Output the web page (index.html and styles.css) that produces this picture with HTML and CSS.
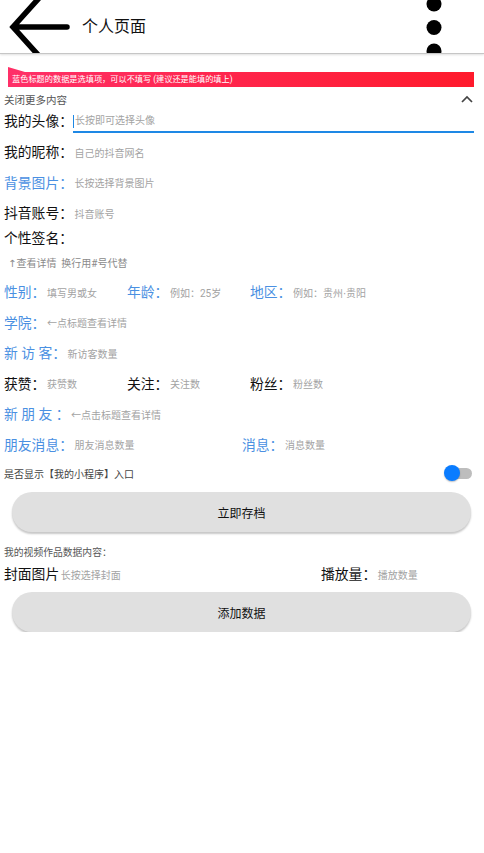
FILE: index.html
```html
<!DOCTYPE html>
<html lang="zh">
<head>
<meta charset="utf-8">
<title>个人页面</title>
<link rel="stylesheet" href="styles.css">
</head>
<body>
<div class="page">
  <header class="appbar">
    <svg class="back" width="80" height="53" viewBox="0 0 80 53">
      <path d="M40 -3 L13 27 L40 57 M13 27 H67" fill="none" stroke="#000" stroke-width="5.5" stroke-linecap="round" stroke-linejoin="miter"/>
    </svg>
    <div class="title">个人页面</div>
    <svg class="more" width="20" height="53" viewBox="0 0 20 53">
      <circle cx="10" cy="4" r="7.5" fill="#000"/>
      <circle cx="10" cy="27.5" r="7.5" fill="#000"/>
      <circle cx="10" cy="51" r="7.5" fill="#000"/>
    </svg>
  </header>

  <div class="banner">蓝色标题的数据是选填项，可以不填写 (建议还是能填的填上)</div>

  <div class="collapse">
    <span>关闭更多内容</span>
    <svg width="14" height="10" viewBox="0 0 14 10"><polyline points="2,8 7,3 12,8" fill="none" stroke="#444" stroke-width="1.7"/></svg>
  </div>

  <div class="form">
    <div class="row avatar">
      <span class="lbl">我的头像：</span>
      <span class="input focused"><span class="cursor"></span>长按即可选择头像</span>
    </div>
    <div class="row r1 first">
      <span class="lbl">我的昵称：</span><span class="ph">自己的抖音网名</span>
    </div>
    <div class="row r1">
      <span class="lbl blue">背景图片：</span><span class="ph">长按选择背景图片</span>
    </div>
    <div class="row r1">
      <span class="lbl">抖音账号：</span><span class="ph">抖音账号</span>
    </div>
    <div class="row sign">
      <span class="lbl">个性签名：</span>
    </div>
    <div class="row tip">
      <span class="tiptext"><span class="arrow">↑</span>查看详情&nbsp;&nbsp;换行用#号代替</span>
    </div>
    <div class="row r1 grid3 after-tip">
      <div class="cell"><span class="lbl blue">性别：</span><span class="ph">填写男或女</span></div>
      <div class="cell"><span class="lbl blue">年龄：</span><span class="ph">例如：25岁</span></div>
      <div class="cell"><span class="lbl blue">地区：</span><span class="ph">例如：贵州<span class="dot">·</span>贵阳</span></div>
    </div>
    <div class="row r1">
      <span class="lbl blue">学院：</span><span class="ph">←点标题查看详情</span>
    </div>
    <div class="row r1">
      <span class="lbl blue">新 访 客：</span><span class="ph">新访客数量</span>
    </div>
    <div class="row r1 grid3">
      <div class="cell"><span class="lbl">获赞：</span><span class="ph">获赞数</span></div>
      <div class="cell"><span class="lbl">关注：</span><span class="ph">关注数</span></div>
      <div class="cell"><span class="lbl">粉丝：</span><span class="ph">粉丝数</span></div>
    </div>
    <div class="row r1">
      <span class="lbl blue">新 朋 友 ：</span><span class="ph">←点击标题查看详情</span>
    </div>
    <div class="row r1 grid2">
      <div class="cell"><span class="lbl blue">朋友消息：</span><span class="ph">朋友消息数量</span></div>
      <div class="cell"><span class="lbl blue">消息：</span><span class="ph">消息数量</span></div>
    </div>
    <div class="row switch-row">
      <span class="switch-label">是否显示【我的小程序】入口</span>
      <span class="switch"><span class="track"></span><span class="thumb"></span></span>
    </div>
  </div>

  <button class="btn save">立即存档</button>

  <div class="form">
    <div class="section-label">我的视频作品数据内容：</div>
    <div class="row cover grid-video">
      <div class="cell"><span class="lbl">封面图片</span><span class="ph">长按选择封面</span></div>
      <div class="cell"><span class="lbl">播放量：</span><span class="ph">播放数量</span></div>
    </div>
  </div>

  <button class="btn add">添加数据</button>
</div>
</body>
</html>
```

FILE: styles.css
```css
html, body {
  margin: 0;
  padding: 0;
  background: #fff;
}
body {
  font-family: Roboto, "Noto Sans CJK SC", sans-serif;
  color: #111;
}
.page {
  width: 484px;
}
.appbar {
  height: 53px;
  display: flex;
  align-items: center;
  overflow: hidden;
  background: #fff;
  border-bottom: 1px solid #c6c6c6;
  box-shadow: 0 1px 2px rgba(0, 0, 0, 0.12);
}
.back {
  display: block;
  flex: none;
}
.title {
  margin-left: 2px;
  font-size: 16px;
  line-height: 53px;
  color: #111;
  flex: 1;
}
.more {
  display: block;
  flex: none;
  margin-right: 40px;
}
.banner {
  margin: 13px 10px 0 8px;
  height: 20px;
  box-sizing: border-box;
  padding: 5px 0 0 4px;
  line-height: 15px;
  font-size: 8.2px;
  color: #fff;
  white-space: nowrap;
  background: linear-gradient(to right, #ff3068, #ff1a2c);
  clip-path: polygon(0 0, 17px 5px, 100% 5px, 100% 100%, 0 100%);
}
.collapse {
  margin-top: 1px;
  height: 22px;
  display: flex;
  align-items: center;
  justify-content: space-between;
  padding: 0 10px 0 4px;
  font-size: 10.5px;
  color: #555;
}
.collapse svg {
  display: block;
}
.form {
  padding: 0 10px 0 4px;
}
.row {
  display: flex;
  align-items: center;
}
.lbl {
  font-size: 13.8px;
  line-height: 20px;
  color: #111;
  white-space: pre;
  flex: none;
}
.lbl.blue {
  color: #4a90e2;
}
.ph {
  margin-left: 1.5px;
  font-size: 10px;
  color: #a3a3a3;
  white-space: nowrap;
}
.dot {
  font-family: "DejaVu Sans", sans-serif;
}
.avatar {
  height: 23px;
  align-items: stretch;
}
.avatar .lbl {
  line-height: 22px;
}
.input {
  flex: 1;
  box-sizing: border-box;
  height: 23px;
  padding-top: 1px;
  line-height: 20px;
  font-size: 10px;
  color: #a3a3a3;
  border-bottom: 2px solid #1e88e5;
  display: flex;
  align-items: center;
}
.cursor {
  display: inline-block;
  width: 1.5px;
  height: 13px;
  background: #1e88e5;
  margin-right: 0.5px;
}
.r1 {
  height: 30.5px;
}
.r1.first {
  margin-top: 4px;
}
.sign {
  height: 19.5px;
}
.tip {
  margin-top: 2px;
  height: 24px;
  padding-left: 4px;
}
.tiptext {
  font-size: 10px;
  color: #8a8a8a;
}
.arrow {
  font-family: "DejaVu Sans", sans-serif;
  color: #8a8a8a;
}
.after-tip {
  margin-top: 3px;
}
.grid3 {
  display: grid;
  grid-template-columns: 123px 123px 1fr;
  align-items: center;
}
.grid2 {
  display: grid;
  grid-template-columns: 238px 1fr;
  align-items: center;
}
.grid-video {
  display: grid;
  grid-template-columns: 317px 1fr;
  align-items: center;
}
.cell {
  display: flex;
  align-items: center;
}
.switch-row {
  margin-top: 2px;
  height: 22px;
  justify-content: space-between;
}
.switch-label {
  font-size: 10px;
  color: #444;
}
.switch {
  position: relative;
  width: 30px;
  height: 18px;
  margin-right: 0;
}
.track {
  position: absolute;
  left: 6px;
  top: 4px;
  width: 22px;
  height: 11px;
  border-radius: 6px;
  background: #bdbdbd;
}
.thumb {
  position: absolute;
  left: 0;
  top: 1px;
  width: 16px;
  height: 16px;
  border-radius: 50%;
  background: #0a7cff;
  box-shadow: 0 1px 1.5px rgba(0, 0, 0, 0.25);
}
.btn {
  display: block;
  box-sizing: border-box;
  margin: 8px 13px 0 12px;
  width: 459px;
  height: 40px;
  border: none;
  border-radius: 20px;
  background: #e0e0e0;
  box-shadow: 0 2px 2px rgba(0, 0, 0, 0.22);
  font-family: Roboto, "Noto Sans CJK SC", sans-serif;
  font-size: 12px;
  color: #111;
  padding: 0;
}
.btn.add {
  margin-top: 6px;
}
.section-label {
  margin-top: 12px;
  height: 18px;
  line-height: 18px;
  font-size: 9.8px;
  color: #555;
}
.cover {
  height: 24px;
}
```
